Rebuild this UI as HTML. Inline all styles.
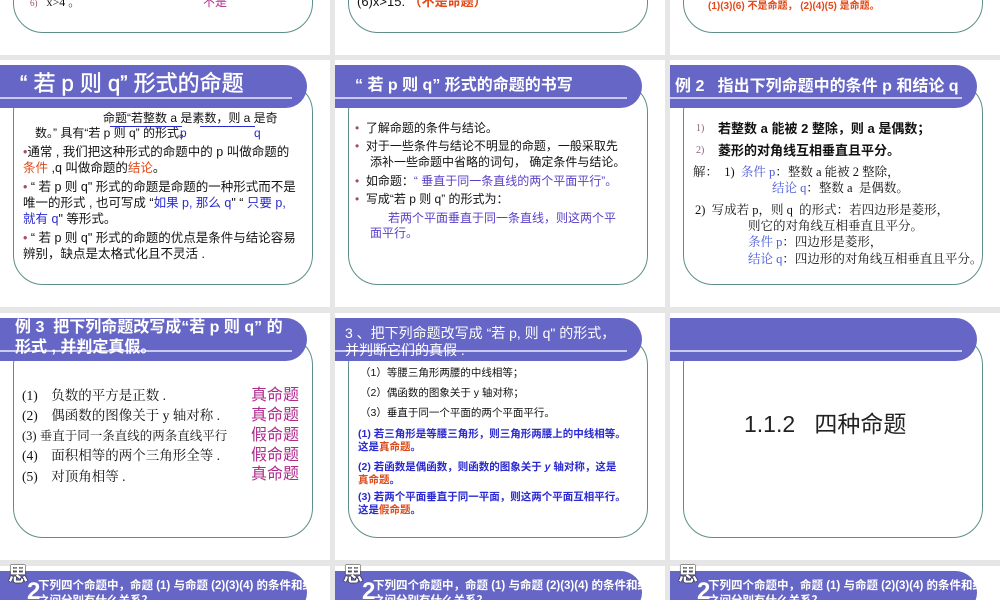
<!DOCTYPE html>
<html style="width:1000px;height:600px;overflow:hidden"><head><meta charset="utf-8"><style>
body{margin:0;width:1000px;height:600px;overflow:hidden;background:#e6e6e6;position:relative;font-family:"Liberation Sans","Noto Sans CJK SC",sans-serif;}
.s{position:absolute;width:330px;height:247px;background:#fff;overflow:hidden}
.hd{position:absolute;left:0;top:5px;width:307px;height:43px;background:#6666c6;border-radius:0 23px 23px 0}
.ln{position:absolute;left:0;top:37px;width:292px;height:2px;background:#c9c9f2}
.bx{position:absolute;left:13px;top:22px;width:298px;height:201px;border:1.5px solid #5d8f88;border-radius:30px}
.t{position:absolute;white-space:nowrap;line-height:1;color:#111}
.w{color:#fff}
.b{color:#2a2ad0}.r{color:#e04a1a}.pu{color:#5a3fc8}.m{color:#b02b8e}
.sf{font-family:"Liberation Serif","Noto Serif CJK SC",serif}
</style></head><body>
<div class="s" style="left:0;top:-192px"><div class="bx"></div><div class="hd"></div><div class="ln"></div></div>
<div class="s" style="left:335px;top:-192px"><div class="bx"></div><div class="hd"></div><div class="ln"></div></div>
<div class="s" style="left:670px;top:-192px"><div class="bx"></div><div class="hd"></div><div class="ln"></div></div>
<div class="s" style="left:0;top:60px"><div class="bx"></div><div class="hd"></div><div class="ln"></div></div>
<div class="s" style="left:335px;top:60px"><div class="bx"></div><div class="hd"></div><div class="ln"></div></div>
<div class="s" style="left:670px;top:60px"><div class="bx"></div><div class="hd"></div><div class="ln"></div></div>
<div class="s" style="left:0;top:313px"><div class="bx"></div><div class="hd"></div><div class="ln"></div></div>
<div class="s" style="left:335px;top:313px"><div class="bx"></div><div class="hd"></div><div class="ln"></div></div>
<div class="s" style="left:670px;top:313px"><div class="bx"></div><div class="hd"></div><div class="ln"></div></div>
<div class="s" style="left:0;top:566px;height:34px"><div class="hd"></div></div>
<div class="s" style="left:335px;top:566px;height:34px"><div class="hd"></div></div>
<div class="s" style="left:670px;top:566px;height:34px"><div class="hd"></div></div>

<div class="t sf" style="left:30px;top:-4px;font-size:12px"><span style="color:#a05070;font-size:9px">6)</span>&nbsp;&nbsp;&nbsp;x&gt;4 。</div>
<div class="t m" style="left:203px;top:-4px;font-size:12px">不是</div>
<div class="t" style="left:357px;top:-5px;font-size:13px">(6)x&gt;15. <span class="r" style="font-weight:bold">（不是命题）</span></div>
<div class="t r" style="left:708px;top:2px;font-size:10px;font-weight:bold">(1)(3)(6) 不是命题， (2)(4)(5) 是命题。</div>

<div class="t w" style="left:20px;top:73px;font-size:22px;-webkit-text-stroke:0.4px #fff">“ 若 p 则 q” 形式的命题</div>
<div class="t" style="left:103px;top:112px;font-size:12px">命题“若整数 a 是素数，则 a 是奇</div>
<div style="position:absolute;left:110px;top:126px;width:72px;height:1px;background:#2a2ad0"></div>
<div style="position:absolute;left:200px;top:126px;width:55px;height:1px;background:#2a2ad0"></div>
<div class="t" style="left:35px;top:127px;font-size:12px">数。” 具有“若 p 则 q” 的形式。</div>
<div class="t b" style="left:180px;top:127px;font-size:12px">p</div>
<div class="t b" style="left:254px;top:127px;font-size:12px">q</div>
<div class="t" style="left:23px;top:146px;font-size:12.5px"><span style="color:#a05060">•</span>通常 , 我们把这种形式的命题中的 p 叫做命题的</div>
<div class="t" style="left:23px;top:162px;font-size:12.5px"><span class="r">条件</span> ,q 叫做命题的<span class="r">结论</span>。</div>
<div class="t" style="left:23px;top:181px;font-size:12.5px"><span style="color:#a05060">•</span> “ 若 p 则 q" 形式的命题是命题的一种形式而不是</div>
<div class="t" style="left:23px;top:197px;font-size:12.5px">唯一的形式 , 也可写成 “<span class="b">如果 p, 那么 q</span>" “ <span class="b">只要 p,</span></div>
<div class="t" style="left:23px;top:213px;font-size:12.5px"><span class="b">就有 q</span>" 等形式。</div>
<div class="t" style="left:23px;top:232px;font-size:12.5px"><span style="color:#a05060">•</span> “ 若 p 则 q" 形式的命题的优点是条件与结论容易</div>
<div class="t" style="left:23px;top:248px;font-size:12.5px">辨别，缺点是太格式化且不灵活 .</div>

<div class="t w" style="left:355px;top:78px;font-size:16px;font-weight:bold">“ 若 p 则 q” 形式的命题的书写</div>
<div class="t" style="left:355px;top:122px;font-size:12px"><span style="color:#a05060">•</span>&nbsp; 了解命题的条件与结论。</div>
<div class="t" style="left:355px;top:140px;font-size:12px"><span style="color:#a05060">•</span>&nbsp; 对于一些条件与结论不明显的命题，一般采取先</div>
<div class="t" style="left:370px;top:156px;font-size:12px">添补一些命题中省略的词句，&nbsp;确定条件与结论。</div>
<div class="t" style="left:355px;top:175px;font-size:12px"><span style="color:#a05060">•</span>&nbsp; 如命题：<span class="pu">“ 垂直于同一条直线的两个平面平行”。</span></div>
<div class="t" style="left:355px;top:193px;font-size:12px"><span style="color:#a05060">•</span>&nbsp; 写成“若 p 则 q” 的形式为：</div>
<div class="t pu" style="left:388px;top:212px;font-size:12px">若两个平面垂直于同一条直线，则这两个平</div>
<div class="t pu" style="left:370px;top:227px;font-size:12px">面平行。</div>

<div class="t w" style="left:675px;top:79px;font-size:16px;font-weight:bold">例 2&nbsp;&nbsp; 指出下列命题中的条件 p 和结论 q</div>
<div class="t sf" style="left:696px;top:124px;font-size:10px;color:#8a6080">1)</div>
<div class="t" style="left:718px;top:122px;font-size:13px;font-weight:bold">若整数 a 能被 2 整除，则 a 是偶数；</div>
<div class="t sf" style="left:696px;top:146px;font-size:10px;color:#8a6080">2)</div>
<div class="t" style="left:718px;top:144px;font-size:13px;font-weight:bold">菱形的对角线互相垂直且平分。</div>
<div class="t sf" style="left:693px;top:166px;font-size:12.5px">解：&nbsp;&nbsp;1)&nbsp; <span style="color:#4a5ad8">条件 p</span>：整数 a 能被 2 整除，</div>
<div class="t sf" style="left:772px;top:182px;font-size:12.5px"><span style="color:#4a5ad8">结论 q</span>：整数 a&nbsp; 是偶数。</div>
<div class="t sf" style="left:695px;top:204px;font-size:12.5px">2)&nbsp; 写成若 p，则 q&nbsp; 的形式：若四边形是菱形，</div>
<div class="t sf" style="left:748px;top:220px;font-size:12.5px">则它的对角线互相垂直且平分。</div>
<div class="t sf" style="left:748px;top:236px;font-size:12.5px"><span style="color:#4a5ad8">条件 p</span>：四边形是菱形，</div>
<div class="t sf" style="left:748px;top:253px;font-size:12.5px"><span style="color:#4a5ad8">结论 q</span>：四边形的对角线互相垂直且平分。</div>

<div class="t w" style="left:15px;top:320px;font-size:16px;font-weight:bold">例 3&nbsp; 把下列命题改写成“若 p 则 q” 的</div>
<div class="t w" style="left:15px;top:340px;font-size:16px;font-weight:bold">形式 , 并判定真假。</div>
<div class="t sf" style="left:22px;top:389px;font-size:13.5px">(1)&nbsp;&nbsp;&nbsp; 负数的平方是正数 .</div>
<div class="t sf" style="left:22px;top:409px;font-size:13.5px">(2)&nbsp;&nbsp;&nbsp; 偶函数的图像关于 y 轴对称 .</div>
<div class="t sf" style="left:22px;top:430px;font-size:12.5px">(3) 垂直于同一条直线的两条直线平行</div>
<div class="t sf" style="left:22px;top:449px;font-size:13.5px">(4)&nbsp;&nbsp;&nbsp; 面积相等的两个三角形全等 .</div>
<div class="t sf" style="left:22px;top:470px;font-size:13.5px">(5)&nbsp;&nbsp;&nbsp; 对顶角相等 .</div>
<div class="t m" style="left:251px;top:388px;font-size:16px">真命题</div>
<div class="t m" style="left:251px;top:408px;font-size:16px">真命题</div>
<div class="t m" style="left:251px;top:428px;font-size:16px">假命题</div>
<div class="t m" style="left:251px;top:448px;font-size:16px">假命题</div>
<div class="t m" style="left:251px;top:467px;font-size:16px">真命题</div>

<div class="t w" style="left:345px;top:326px;font-size:14px">3 、把下列命题改写成 “若 p, 则 q" 的形式，</div>
<div class="t w" style="left:345px;top:343px;font-size:14px">并判断它们的真假 .</div>
<div class="t" style="left:360px;top:368px;font-size:10.5px">（1）等腰三角形两腰的中线相等；</div>
<div class="t" style="left:360px;top:388px;font-size:10.5px">（2）偶函数的图象关于 y 轴对称；</div>
<div class="t" style="left:360px;top:408px;font-size:10.5px">（3）垂直于同一个平面的两个平面平行。</div>
<div class="t b" style="left:358px;top:429px;font-size:10.5px;font-weight:bold">(1) 若三角形是等腰三角形，则三角形两腰上的中线相等。</div>
<div class="t b" style="left:358px;top:442px;font-size:10.5px;font-weight:bold">这是<span class="r">真命题</span>。</div>
<div class="t b" style="left:358px;top:462px;font-size:10.5px;font-weight:bold">(2) 若函数是偶函数，则函数的图象关于 <i>y</i> 轴对称，这是</div>
<div class="t b" style="left:358px;top:475px;font-size:10.5px;font-weight:bold"><span class="r">真命题</span>。</div>
<div class="t b" style="left:358px;top:492px;font-size:10.5px;font-weight:bold">(3) 若两个平面垂直于同一平面，则这两个平面互相平行。</div>
<div class="t b" style="left:358px;top:505px;font-size:10.5px;font-weight:bold">这是<span class="r">假命题</span>。</div>

<div class="t" style="left:744px;top:413px;font-size:23px;color:#222">1.1.2&nbsp;&nbsp; 四种命题</div>

<div class="t" style="left:8px;top:565px;font-size:20px;color:#fff;font-weight:bold;text-shadow:0 0 1px #000,0 0 1px #000,0 0 1px #000">思</div>
<div class="t w" style="left:27px;top:580px;font-size:24px;font-weight:bold">2</div>
<div class="t w" style="left:38px;top:581px;font-size:11.5px;font-weight:bold">下列四个命题中，命题 (1) 与命题 (2)(3)(4) 的条件和结论</div>
<div class="t w" style="left:38px;top:596px;font-size:11.5px;font-weight:bold">之间分别有什么关系？</div>
<div class="t" style="left:343px;top:565px;font-size:20px;color:#fff;font-weight:bold;text-shadow:0 0 1px #000,0 0 1px #000,0 0 1px #000">思</div>
<div class="t w" style="left:362px;top:580px;font-size:24px;font-weight:bold">2</div>
<div class="t w" style="left:373px;top:581px;font-size:11.5px;font-weight:bold">下列四个命题中，命题 (1) 与命题 (2)(3)(4) 的条件和结论</div>
<div class="t w" style="left:373px;top:596px;font-size:11.5px;font-weight:bold">之间分别有什么关系？</div>
<div class="t" style="left:678px;top:565px;font-size:20px;color:#fff;font-weight:bold;text-shadow:0 0 1px #000,0 0 1px #000,0 0 1px #000">思</div>
<div class="t w" style="left:697px;top:580px;font-size:24px;font-weight:bold">2</div>
<div class="t w" style="left:708px;top:581px;font-size:11.5px;font-weight:bold">下列四个命题中，命题 (1) 与命题 (2)(3)(4) 的条件和结论</div>
<div class="t w" style="left:708px;top:596px;font-size:11.5px;font-weight:bold">之间分别有什么关系？</div>
</body></html>
